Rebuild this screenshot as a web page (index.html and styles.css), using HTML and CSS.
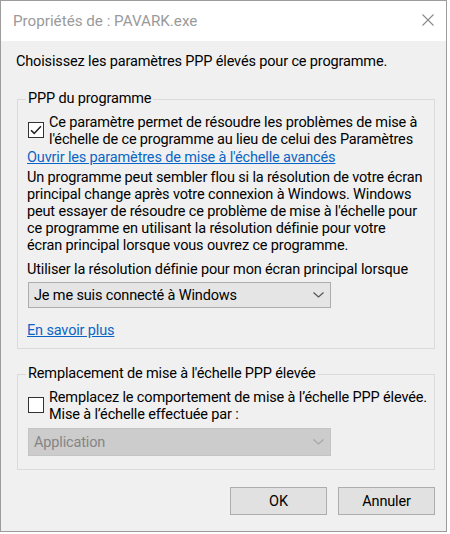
FILE: index.html
```html
<!DOCTYPE html>
<html lang="fr">
<head>
  <meta charset="UTF-8">
  <title>Propriétés de : PAVARK.exe</title>
  <link rel="stylesheet" href="styles.css">
</head>
<body>

<div class="window">
  <div class="titlebar">
    <span class="title">Propriétés de : PAVARK.exe</span>
    <svg class="close" width="12" height="12" viewBox="0 0 12 12">
      <path d="M0.5 0.5L11.5 11.5M11.5 0.5L0.5 11.5" stroke="#8a8a8a" stroke-width="1.1" fill="none"/>
    </svg>
  </div>

  <div class="content">
    <p class="intro">Choisissez les paramètres PPP élevés pour ce programme.</p>

    <fieldset class="group">
      <legend>PPP du programme</legend>
      <div class="check">
        <span class="box">
          <svg width="14" height="14" viewBox="0 0 14 14">
            <path d="M2 7.2L5.2 10.4L12 3.2" stroke="#222" stroke-width="1.5" fill="none"/>
          </svg>
        </span>
        <span class="line">Ce paramètre permet de résoudre les problèmes de mise à<br>l'échelle de ce programme au lieu de celui des Paramètres</span>
      </div>
      <a class="link">Ouvrir les paramètres de mise à l'échelle avancés</a>
      <p class="desc">Un programme peut sembler flou si la résolution de votre écran<br>principal change après votre connexion à Windows. Windows<br>peut essayer de résoudre ce problème de mise à l'échelle pour<br>ce programme en utilisant la résolution définie pour votre<br>écran principal lorsque vous ouvrez ce programme.</p>
      <p class="label">Utiliser la résolution définie pour mon écran principal lorsque</p>
      <div class="select">
        <span>Je me suis connecté à Windows</span>
        <svg width="11" height="6" viewBox="0 0 11 6">
          <path d="M0.5 0.5L5.5 5L10.5 0.5" stroke="#555" stroke-width="1.2" fill="none"/>
        </svg>
      </div>
      <a class="link more">En savoir plus</a>
    </fieldset>

    <fieldset class="group second">
      <legend>Remplacement de mise à l'échelle PPP élevée</legend>
      <div class="check">
        <span class="box"></span>
        <span class="line">Remplacez le comportement de mise à l’échelle PPP élevée.<br>Mise à l’échelle effectuée par :</span>
      </div>
      <div class="select disabled">
        <span>Application</span>
        <svg width="11" height="6" viewBox="0 0 11 6">
          <path d="M0.5 0.5L5.5 5L10.5 0.5" stroke="#a6a6a6" stroke-width="1.2" fill="none"/>
        </svg>
      </div>
    </fieldset>

    <div class="buttons">
      <button>OK</button>
      <button>Annuler</button>
    </div>
  </div>
</div>

</body>
</html>
```

FILE: styles.css
```css
* {
  box-sizing: border-box;
}
body {
  margin: 0;
  background: #fff;
  font-family: Roboto, "Liberation Sans", sans-serif;
  font-size: 14.5px;
  letter-spacing: -0.15px;
  color: #000;
}
.window {
  width: 447px;
  height: 532px;
  border: 1px solid #9c9c9c;
  background: #f0f0f0;
  display: flex;
  flex-direction: column;
}
.titlebar {
  height: 40px;
  flex-shrink: 0;
  background: #fff;
  display: flex;
  align-items: center;
  justify-content: space-between;
  padding: 0 12px 0 12px;
}
.title {
  font-size: 15.2px;
  letter-spacing: 0;
  color: #9a9a9a;
}
.close {
  margin-top: -2px;
}
.content {
  padding: 12px 11px 0 15px;
  line-height: 17px;
}
.intro {
  margin: 0 0 19px;
  line-height: 18px;
}
.group {
  margin: 0 0 0 1px;
  padding: 6px 9px 9px 9px;
  border: 1px solid #dadada;
  min-width: 0;
}
.group legend {
  padding: 0 2px;
  margin-left: -1px;
  line-height: 18px;
}
.second {
  margin-top: 16px;
  padding-bottom: 13px;
}
.check {
  display: flex;
  align-items: flex-start;
}
.box {
  width: 16px;
  height: 16px;
  flex-shrink: 0;
  margin: 8px 5px 0 1px;
  border: 1px solid #333;
  background: #fff;
  display: flex;
  align-items: center;
  justify-content: center;
}
.line {
  white-space: nowrap;
}
.link {
  display: block;
  margin-top: 1px;
  color: #0a66c6;
  text-decoration: underline;
  white-space: nowrap;
}
.desc {
  margin: 3px 0 0;
  white-space: nowrap;
}
.label {
  margin: 7px 0 0;
  white-space: nowrap;
}
.select {
  width: 303px;
  height: 26px;
  margin: 4px 0 0 1px;
  padding: 0 6px 0 5px;
  border: 1px solid #adadad;
  background: #e5e5e5;
  display: flex;
  align-items: center;
  justify-content: space-between;
}
.select.disabled {
  height: 28px;
  margin-top: 5px;
  border-color: #c4c4c4;
  background: #cccccc;
  color: #858585;
}
.more {
  margin-top: 14px;
}
.buttons {
  margin-top: 17px;
  display: flex;
  justify-content: flex-end;
  gap: 11px;
}
button {
  width: 97px;
  height: 28px;
  font-family: inherit;
  font-size: 14.5px;
  letter-spacing: -0.15px;
  color: #000;
  background: #e1e1e1;
  border: 1px solid #adadad;
  padding: 0;
}
```
